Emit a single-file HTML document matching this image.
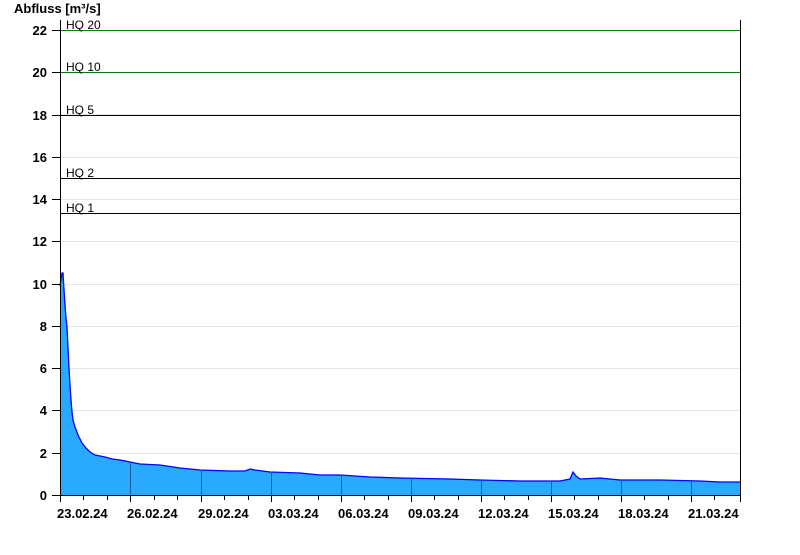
<!DOCTYPE html>
<html><head><meta charset="utf-8"><style>
body{margin:0;background:#fff;width:800px;height:550px;overflow:hidden}
svg text{font-family:"Liberation Sans",Arial,sans-serif}
</style></head><body>
<svg width="800" height="550" xmlns="http://www.w3.org/2000/svg">
<text x="14" y="13" font-size="13" font-weight="bold">Abfluss [m³/s]</text>
<g stroke="#e6e6e6" stroke-width="1">
<line x1="60" y1="453.5" x2="740" y2="453.5"/><line x1="60" y1="410.5" x2="740" y2="410.5"/>
<line x1="60" y1="368.5" x2="740" y2="368.5"/><line x1="60" y1="326.5" x2="740" y2="326.5"/>
<line x1="60" y1="284.5" x2="740" y2="284.5"/><line x1="60" y1="241.5" x2="740" y2="241.5"/>
<line x1="60" y1="199.5" x2="740" y2="199.5"/><line x1="60" y1="157.5" x2="740" y2="157.5"/>
<line x1="60" y1="114.5" x2="740" y2="114.5"/><line x1="60" y1="72.5" x2="740" y2="72.5"/>
<line x1="60" y1="30.5" x2="740" y2="30.5"/>
</g>
<polygon fill="#29a9ff" points="60,495 60,286 62,273 63,273 64,290 65,305 66,318 67,327 68,348 69,368 70,385 71,400 72,412 73,420 75,427 78,435 82,443 86,448 90,452 95,455 100,456 105,457 112,459 120,460 130,462 140,464 160,465 180,468 200,470 230,471 245,471 250,469 255,470 270,472 300,473 320,475 340,475 370,477 400,478 450,479 480,480 520,481 560,481 570,479 573,472 576,476 580,479 600,478 620,480 660,480 700,481 720,482 740,482 740,495"/>
<polyline fill="none" stroke="#0000ff" stroke-width="1.3" points="60,286 62,273 63,273 64,290 65,305 66,318 67,327 68,348 69,368 70,385 71,400 72,412 73,420 75,427 78,435 82,443 86,448 90,452 95,455 100,456 105,457 112,459 120,460 130,462 140,464 160,465 180,468 200,470 230,471 245,471 250,469 255,470 270,472 300,473 320,475 340,475 370,477 400,478 450,479 480,480 520,481 560,481 570,479 573,472 576,476 580,479 600,478 620,480 660,480 700,481 720,482 740,482"/>
<g stroke="#1a5e8a" stroke-width="1">
<line x1="130.5" y1="462" x2="130.5" y2="495"/><line x1="201.5" y1="470" x2="201.5" y2="495"/>
<line x1="271.5" y1="472" x2="271.5" y2="495"/><line x1="341.5" y1="475" x2="341.5" y2="495"/>
<line x1="411.5" y1="478" x2="411.5" y2="495"/><line x1="481.5" y1="480" x2="481.5" y2="495"/>
<line x1="551.5" y1="481" x2="551.5" y2="495"/><line x1="621.5" y1="480" x2="621.5" y2="495"/>
<line x1="691.5" y1="481" x2="691.5" y2="495"/>
</g>
<g stroke-width="1">
<line x1="60" y1="30.5" x2="740" y2="30.5" stroke="#008000"/>
<line x1="60" y1="72.5" x2="740" y2="72.5" stroke="#008000"/>
<line x1="60" y1="115.5" x2="740" y2="115.5" stroke="#000"/>
<line x1="60" y1="178.5" x2="740" y2="178.5" stroke="#000"/>
<line x1="60" y1="213.5" x2="740" y2="213.5" stroke="#000"/>
</g>
<g font-size="12" fill="#000">
<text x="66" y="29">HQ 20</text><text x="66" y="71">HQ 10</text><text x="66" y="114">HQ 5</text>
<text x="66" y="177">HQ 2</text><text x="66" y="212">HQ 1</text>
</g>
<g stroke="#000" stroke-width="1">
<line x1="60.5" y1="20" x2="60.5" y2="495"/><line x1="740.5" y1="20" x2="740.5" y2="495"/>
<line x1="60" y1="495.5" x2="741" y2="495.5"/>
</g>
<g stroke="#000" stroke-width="1">
<line x1="52" y1="495.5" x2="60" y2="495.5"/><line x1="52" y1="453.5" x2="60" y2="453.5"/>
<line x1="52" y1="410.5" x2="60" y2="410.5"/><line x1="52" y1="368.5" x2="60" y2="368.5"/>
<line x1="52" y1="326.5" x2="60" y2="326.5"/><line x1="52" y1="284.5" x2="60" y2="284.5"/>
<line x1="52" y1="241.5" x2="60" y2="241.5"/><line x1="52" y1="199.5" x2="60" y2="199.5"/>
<line x1="52" y1="157.5" x2="60" y2="157.5"/><line x1="52" y1="115.5" x2="60" y2="115.5"/>
<line x1="52" y1="72.5" x2="60" y2="72.5"/><line x1="52" y1="30.5" x2="60" y2="30.5"/>
</g>
<g font-size="13" font-weight="bold" text-anchor="end">
<text x="47" y="500">0</text><text x="47" y="458">2</text><text x="47" y="415">4</text>
<text x="47" y="373">6</text><text x="47" y="331">8</text><text x="47" y="289">10</text>
<text x="47" y="246">12</text><text x="47" y="204">14</text><text x="47" y="162">16</text>
<text x="47" y="120">18</text><text x="47" y="77">20</text><text x="47" y="35">22</text>
</g>
<g stroke="#000" stroke-width="1">
<line x1="60.5" y1="495" x2="60.5" y2="502"/><line x1="83.5" y1="495" x2="83.5" y2="500"/><line x1="107.5" y1="495" x2="107.5" y2="500"/>
<line x1="130.5" y1="495" x2="130.5" y2="502"/><line x1="154.5" y1="495" x2="154.5" y2="500"/><line x1="177.5" y1="495" x2="177.5" y2="500"/>
<line x1="201.5" y1="495" x2="201.5" y2="502"/><line x1="224.5" y1="495" x2="224.5" y2="500"/><line x1="248.5" y1="495" x2="248.5" y2="500"/>
<line x1="271.5" y1="495" x2="271.5" y2="502"/><line x1="294.5" y1="495" x2="294.5" y2="500"/><line x1="318.5" y1="495" x2="318.5" y2="500"/>
<line x1="341.5" y1="495" x2="341.5" y2="502"/><line x1="364.5" y1="495" x2="364.5" y2="500"/><line x1="388.5" y1="495" x2="388.5" y2="500"/>
<line x1="411.5" y1="495" x2="411.5" y2="502"/><line x1="434.5" y1="495" x2="434.5" y2="500"/><line x1="458.5" y1="495" x2="458.5" y2="500"/>
<line x1="481.5" y1="495" x2="481.5" y2="502"/><line x1="504.5" y1="495" x2="504.5" y2="500"/><line x1="528.5" y1="495" x2="528.5" y2="500"/>
<line x1="551.5" y1="495" x2="551.5" y2="502"/><line x1="574.5" y1="495" x2="574.5" y2="500"/><line x1="598.5" y1="495" x2="598.5" y2="500"/>
<line x1="621.5" y1="495" x2="621.5" y2="502"/><line x1="644.5" y1="495" x2="644.5" y2="500"/><line x1="668.5" y1="495" x2="668.5" y2="500"/>
<line x1="691.5" y1="495" x2="691.5" y2="502"/><line x1="714.5" y1="495" x2="714.5" y2="500"/><line x1="740.5" y1="495" x2="740.5" y2="502"/>
</g>
<g font-size="13" font-weight="bold">
<text x="57" y="518">23.02.24</text><text x="127" y="518">26.02.24</text><text x="198" y="518">29.02.24</text>
<text x="268" y="518">03.03.24</text><text x="338" y="518">06.03.24</text><text x="408" y="518">09.03.24</text>
<text x="478" y="518">12.03.24</text><text x="548" y="518">15.03.24</text><text x="618" y="518">18.03.24</text>
<text x="688" y="518">21.03.24</text>
</g>
</svg>
</body></html>
